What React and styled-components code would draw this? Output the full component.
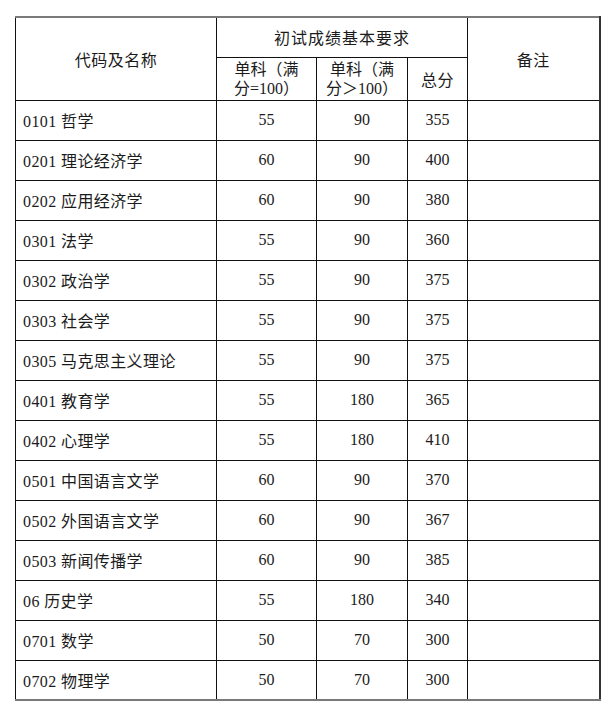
import React from "react";
import styled, { createGlobalStyle } from "styled-components";

const rows = [
  ["0101 哲学", 55, 90, 355],
  ["0201 理论经济学", 60, 90, 400],
  ["0202 应用经济学", 60, 90, 380],
  ["0301 法学", 55, 90, 360],
  ["0302 政治学", 55, 90, 375],
  ["0303 社会学", 55, 90, 375],
  ["0305 马克思主义理论", 55, 90, 375],
  ["0401 教育学", 55, 180, 365],
  ["0402 心理学", 55, 180, 410],
  ["0501 中国语言文学", 60, 90, 370],
  ["0502 外国语言文学", 60, 90, 367],
  ["0503 新闻传播学", 60, 90, 385],
  ["06 历史学", 55, 180, 340],
  ["0701 数学", 50, 70, 300],
  ["0702 物理学", 50, 70, 300],
];

const fontStack = `"Liberation Serif", "Times New Roman", "Noto Sans CJK SC", serif`;

const GlobalStyle = createGlobalStyle`
  body {
    margin: 0;
    background: #fff;
    font-family: ${fontStack};
    color: #1b1b1b;
  }
`;

const Page = styled.div`
  padding: 16px 0 0 15px;
`;

const Table = styled.table`
  border-collapse: collapse;
  table-layout: fixed;
  width: 584px;
  border-top: 2px solid #7a7a7a;
  border-bottom: 2px solid #7a7a7a;
  border-left: 1px solid #222;
  border-right: 2px solid #333;
  font-family: ${fontStack};
  font-size: 16px;
  color: #1b1b1b;
`;

const Row = styled.tr`
  height: ${(p) => p.$h || 40}px;
`;

const Cell = styled.td`
  border: 1px solid #111;
  padding: 0;
  text-align: ${(p) => (p.$left ? "left" : "center")};
  padding-left: ${(p) => (p.$left ? "7px" : "0")};
  vertical-align: middle;
  letter-spacing: ${(p) => (p.$left ? "0.4px" : "0")};
  white-space: nowrap;
  font-family: ${fontStack};
`;

const HeadCell = styled.th`
  border: 1px solid #111;
  padding: 0;
  font-weight: normal;
  text-align: center;
  vertical-align: middle;
  letter-spacing: ${(p) => p.$ls || "0.5px"};
  line-height: ${(p) => p.$lh || "normal"};
  font-family: ${fontStack};
`;

export default function App() {
  return (
    <Page>
      <GlobalStyle />
      <Table>
        <colgroup>
          <col style={{ width: 201 }} />
          <col style={{ width: 100 }} />
          <col style={{ width: 91 }} />
          <col style={{ width: 60 }} />
          <col style={{ width: 132 }} />
        </colgroup>
        <thead>
          <Row $h={40}>
            <HeadCell rowSpan={2}>代码及名称</HeadCell>
            <HeadCell colSpan={3} $ls="1px">
              初试成绩基本要求
            </HeadCell>
            <HeadCell rowSpan={2}>备注</HeadCell>
          </Row>
          <Row $h={43}>
            <HeadCell $lh="19px" $ls="0">
              单科（满
              <br />
              分=100）
            </HeadCell>
            <HeadCell $lh="19px" $ls="0">
              单科（满
              <br />
              分＞100）
            </HeadCell>
            <HeadCell>总分</HeadCell>
          </Row>
        </thead>
        <tbody>
          {rows.map(([name, a, b, total]) => (
            <Row key={name}>
              <Cell $left>{name}</Cell>
              <Cell>{a}</Cell>
              <Cell>{b}</Cell>
              <Cell>{total}</Cell>
              <Cell />
            </Row>
          ))}
        </tbody>
      </Table>
    </Page>
  );
}
